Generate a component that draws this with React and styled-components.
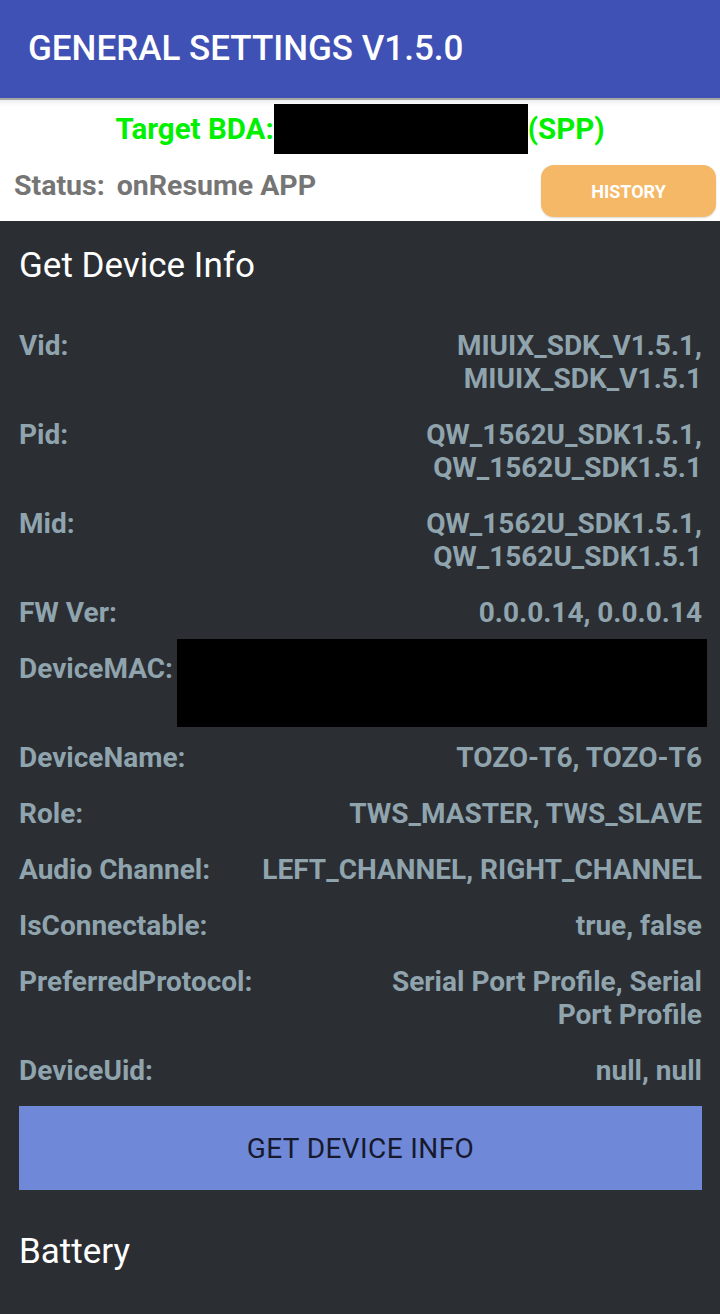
import React from "react";
import styled, { createGlobalStyle } from "styled-components";

const GlobalStyle = createGlobalStyle`
  html, body {
    margin: 0;
    padding: 0;
    background: #2b2e33;
  }
  body {
    font-family: Roboto, "Noto Sans", "Liberation Sans", sans-serif;
    -webkit-font-smoothing: antialiased;
  }
`;

const Page = styled.div`
  width: 720px;
  min-height: 1314px;
  background: #2b2e33;
  display: flex;
  flex-direction: column;
`;

const AppBar = styled.div`
  height: 100px;
  box-sizing: border-box;
  background: #3f51b5;
  display: flex;
  align-items: center;
  padding: 0 28px;
  border-bottom: 2px solid #a6a6a6;
`;

const AppTitle = styled.div`
  color: #ffffff;
  font-size: 35px;
  font-weight: 500;
  margin-top: -2px;
`;

const Header = styled.div`
  background: linear-gradient(#eeeeee 0px, #ffffff 6px);
  height: 121px;
  display: flex;
  flex-direction: column;
`;

const TargetRow = styled.div`
  display: flex;
  justify-content: center;
  align-items: center;
  margin-top: 4px;
  height: 50px;
`;

const TargetText = styled.span`
  color: #00f000;
  font-size: 29.5px;
  font-weight: 700;
`;

const Redacted = styled.div`
  background: #000000;
  width: ${({ $w }) => $w}px;
  height: ${({ $h }) => $h}px;
  flex-shrink: 0;
`;

const StatusRow = styled.div`
  display: flex;
  align-items: center;
  justify-content: space-between;
  padding: 0 4px 0 14px;
  margin-top: 11px;
`;

const StatusText = styled.div`
  display: flex;
  gap: 12px;
  color: #757575;
  font-size: 28.5px;
  font-weight: 700;
  margin-top: -12px;
`;

const HistoryButton = styled.button`
  width: 175px;
  height: 52px;
  border: none;
  border-radius: 13px;
  background: #f4b866;
  color: #ffffff;
  font-family: inherit;
  font-size: 18px;
  font-weight: 700;
  box-shadow: 0 1px 2px rgba(0, 0, 0, 0.15);
`;

const Section = styled.div`
  padding: 0 18px 0 19px;
  display: flex;
  flex-direction: column;
`;

const SectionTitle = styled.div`
  color: #ffffff;
  font-size: 35px;
  font-weight: 400;
  line-height: 41px;
  margin-top: ${({ $top }) => $top}px;
`;

const InfoList = styled.div`
  display: flex;
  flex-direction: column;
  gap: 23px;
  margin-top: 43px;
`;

const InfoRow = styled.div`
  display: flex;
  justify-content: space-between;
  align-items: flex-start;
  font-size: 28px;
  font-weight: 700;
  line-height: 33px;
  color: #90a4ae;
`;

const Label = styled.div`
  white-space: nowrap;
`;

const Value = styled.div`
  text-align: right;
  white-space: nowrap;
`;

const MacBox = styled(Redacted)`
  margin: -13px -5px -9px 0;
`;

const ActionButton = styled.button`
  margin-top: 19px;
  height: 84px;
  border: none;
  background: #7088d8;
  color: #161a2c;
  font-family: inherit;
  font-size: 28px;
  font-weight: 400;
  letter-spacing: 0.4px;
`;

const rows = [
  { label: "Vid:", value: ["MIUIX_SDK_V1.5.1,", "MIUIX_SDK_V1.5.1"] },
  { label: "Pid:", value: ["QW_1562U_SDK1.5.1,", "QW_1562U_SDK1.5.1"] },
  { label: "Mid:", value: ["QW_1562U_SDK1.5.1,", "QW_1562U_SDK1.5.1"] },
  { label: "FW Ver:", value: ["0.0.0.14, 0.0.0.14"] },
  { label: "DeviceMAC:", mac: true },
  { label: "DeviceName:", value: ["TOZO-T6, TOZO-T6"] },
  { label: "Role:", value: ["TWS_MASTER, TWS_SLAVE"] },
  { label: "Audio Channel:", value: ["LEFT_CHANNEL, RIGHT_CHANNEL"] },
  { label: "IsConnectable:", value: ["true, false"] },
  { label: "PreferredProtocol:", value: ["Serial Port Profile, Serial", "Port Profile"] },
  { label: "DeviceUid:", value: ["null, null"] },
];

export default function App() {
  return (
    <>
      <GlobalStyle />
      <Page>
        <AppBar>
          <AppTitle>GENERAL SETTINGS V1.5.0</AppTitle>
        </AppBar>
        <Header>
          <TargetRow>
            <TargetText>Target BDA:</TargetText>
            <Redacted $w={254} $h={50} />
            <TargetText>(SPP)</TargetText>
          </TargetRow>
          <StatusRow>
            <StatusText>
              <span>Status:</span>
              <span>onResume APP</span>
            </StatusText>
            <HistoryButton>HISTORY</HistoryButton>
          </StatusRow>
        </Header>
        <Section>
          <SectionTitle $top={24}>Get Device Info</SectionTitle>
          <InfoList>
            {rows.map((row) => (
              <InfoRow key={row.label}>
                <Label>{row.label}</Label>
                {row.mac ? (
                  <MacBox $w={530} $h={88} />
                ) : (
                  <Value>
                    {row.value.map((line) => (
                      <div key={line}>{line}</div>
                    ))}
                  </Value>
                )}
              </InfoRow>
            ))}
          </InfoList>
          <ActionButton>GET DEVICE INFO</ActionButton>
          <SectionTitle $top={41}>Battery</SectionTitle>
        </Section>
      </Page>
    </>
  );
}
